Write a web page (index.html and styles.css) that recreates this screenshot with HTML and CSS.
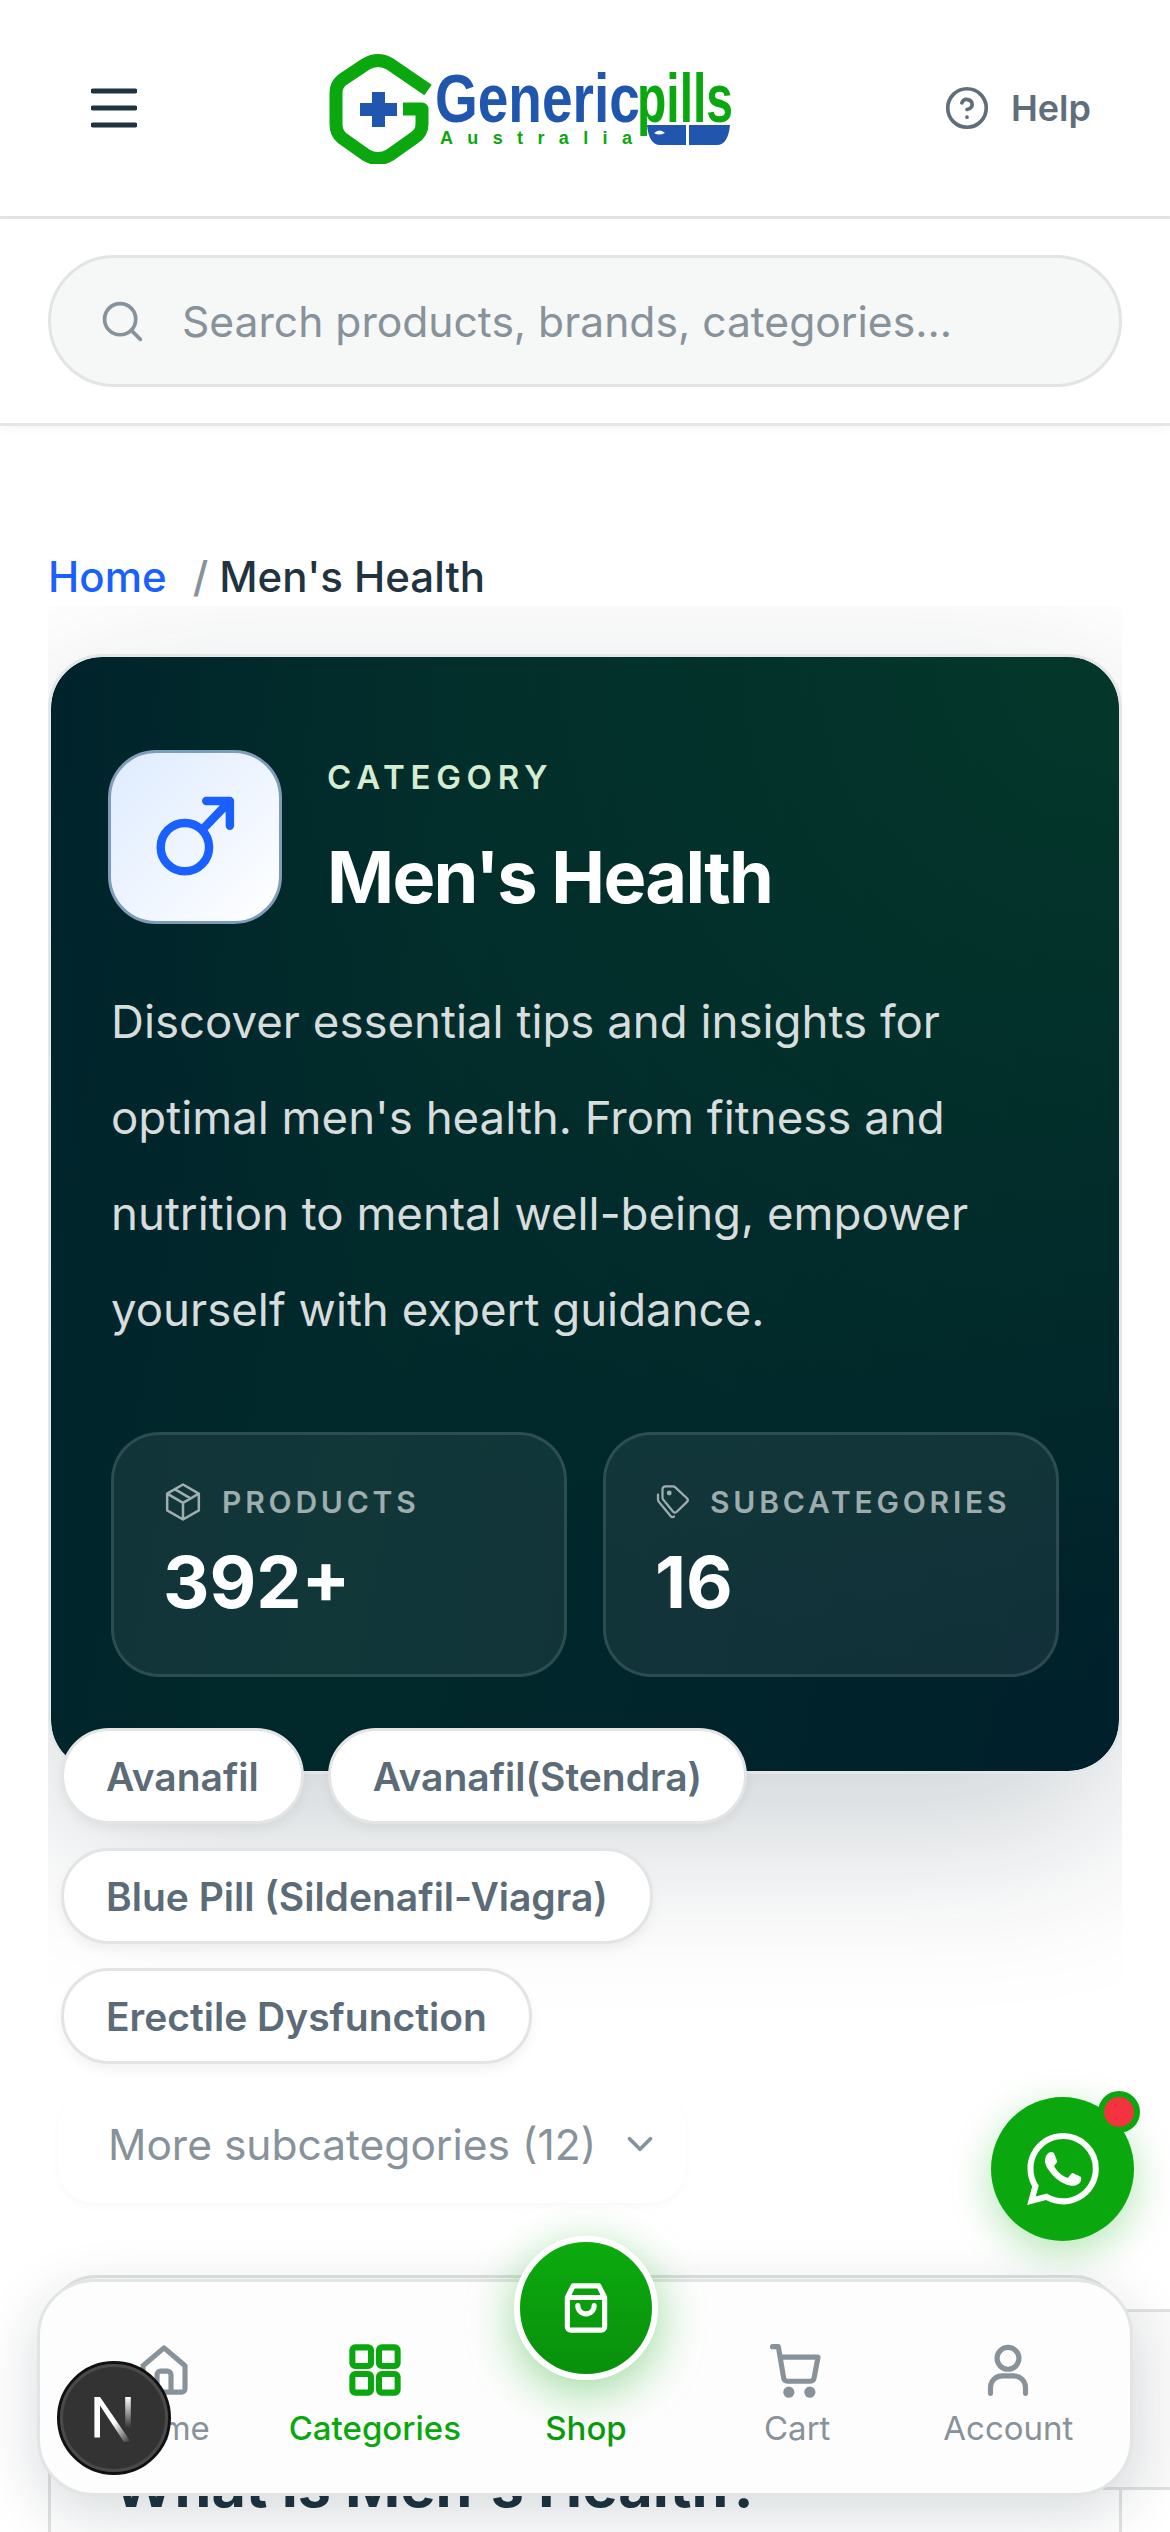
FILE: index.html
```html
<!DOCTYPE html>
<html lang="en">
<head>
  <meta charset="UTF-8">
  <title>Men's Health - Genericpills Australia</title>
  <link rel="stylesheet" href="styles.css">
</head>
<body>
  <header class="topbar">
    <svg class="menu-icon" viewBox="0 0 46 40"><path d="M2 3h42M2 20h42M2 37h42"/></svg>
    <svg class="logo" viewBox="0 0 410 112">
      <path class="logo-hex" d="M100 38 L62 12 Q50 5 38 12 L14 28 Q8 33 8 41 V72 Q8 81 14 86 L38 103 Q50 110 62 103 L86 86 Q94 81 94 72 V57 H75"/>
      <path class="logo-cross" d="M32 51h12V40h13v11h12v13H57v11H44V64H32z"/>
      <text class="logo-word logo-blue" transform="translate(107 70) scale(1 1.24)" font-size="55">Generic</text>
      <text class="logo-word logo-green" transform="translate(309 70) scale(1 1.42)" font-size="48">pills</text>
      <path class="logo-bowl" d="M319 73h39v20h-26q-11 0-13-20zM361 73h41q-2 20-13 20h-28z"/>
      <path class="logo-leaf" d="M326 81q6-5 11 0q-6 3-11 0z"/>
      <text class="logo-sub" x="112" y="92" textLength="192">Australia</text>
    </svg>
    <a class="help">
      <svg class="help-icon" viewBox="0 0 24 24"><circle cx="12" cy="12" r="10.5"/><path d="M9.200 9.200a2.900 2.900 0 0 1 5.600 1c0 1.900-2.800 2.600-2.800 2.600M12 17h.01"/></svg>
      Help
    </a>
  </header>

  <div class="searchbar">
    <div class="search">
      <svg class="search-icon" viewBox="0 0 24 24"><circle cx="11" cy="11" r="8.5"/><path d="M17.5 17.5 22 22"/></svg>
      <span class="placeholder">Search products, brands, categories...</span>
    </div>
  </div>

  <main class="main">
    <nav class="crumbs"><a class="crumb-link">Home</a><span class="crumb-sep">/</span><span>Men's Health</span></nav>

    <div class="clip">
      <section class="hero">
        <div class="hero-head">
          <div class="hero-icon">
            <svg viewBox="0 0 80 80"><circle cx="31" cy="49" r="21.5"/><path d="M47 33 71 8M50 8h21v22"/></svg>
          </div>
          <div>
            <div class="eyebrow">CATEGORY</div>
            <h1 class="hero-title">Men's Health</h1>
          </div>
        </div>
        <p class="hero-text">Discover essential tips and insights for optimal men's health. From fitness and nutrition to mental well-being, empower yourself with expert guidance.</p>
        <div class="stats">
          <div class="stat">
            <div class="stat-label">
              <svg viewBox="0 0 24 24"><path d="M12 1.500 21.500 7v10L12 22.500 2.500 17V7zM2.500 7l9.500 5.500L21.500 7M12 12.500v10M7 4.300l9.500 5.500"/></svg>
              PRODUCTS
            </div>
            <div class="stat-value">392+</div>
          </div>
          <div class="stat">
            <div class="stat-label">
              <svg class="tag-icon" viewBox="0 0 24 24"><path d="M7 1.500h5a2 2 0 0 1 1.400.6l7.900 7.400a1.700 1.700 0 0 1 0 2.400l-6.800 6.600a1.700 1.700 0 0 1-2.400 0L5.600 10.600a2 2 0 0 1-.6-1.400V3.500a2 2 0 0 1 2-2zM2 7v3.500a2 2 0 0 0 .6 1.400l7.900 9.600a1.700 1.700 0 0 0 2.200.2"/><circle cx="9.500" cy="6" r=".9"/></svg>
              SUBCATEGORIES
            </div>
            <div class="stat-value">16</div>
          </div>
        </div>
      </section>

      <div class="chips">
        <a class="chip">Avanafil</a>
        <a class="chip">Avanafil(Stendra)</a>
        <a class="chip">Blue Pill (Sildenafil-Viagra)</a>
        <a class="chip">Erectile Dysfunction</a>
      </div>

      <button class="more">
        More subcategories (12)
        <svg viewBox="0 0 24 24"><path d="m5 8.500 7 7 7-7"/></svg>
      </button>
    </div>

    <article class="article">
      <h2 class="article-title">What is Men's Health?</h2>
    </article>
  </main>

  <div class="peek"></div>

  <a class="whatsapp">
    <svg viewBox="0 0 24 24"><path d="M17.472 14.382c-.297-.149-1.758-.867-2.03-.967-.273-.099-.471-.148-.67.15-.197.297-.767.966-.94 1.164-.173.199-.347.223-.644.075-.297-.15-1.255-.463-2.39-1.475-.883-.788-1.48-1.761-1.653-2.059-.173-.297-.018-.458.13-.606.134-.133.298-.347.446-.52.149-.174.198-.298.298-.497.099-.198.05-.371-.025-.52-.075-.149-.669-1.612-.916-2.207-.242-.579-.487-.5-.669-.51-.173-.008-.371-.01-.57-.01-.198 0-.52.074-.792.372-.272.297-1.04 1.016-1.04 2.479 0 1.462 1.065 2.875 1.213 3.074.149.198 2.096 3.2 5.077 4.487.709.306 1.262.489 1.694.625.712.227 1.36.195 1.871.118.571-.085 1.758-.719 2.006-1.413.248-.694.248-1.289.173-1.413-.074-.124-.272-.198-.57-.347m-5.421 7.403h-.004a9.87 9.87 0 01-5.031-1.378l-.361-.214-3.741.982.998-3.648-.235-.374a9.86 9.86 0 01-1.51-5.26c.001-5.45 4.436-9.884 9.888-9.884 2.64 0 5.122 1.03 6.988 2.898a9.825 9.825 0 012.893 6.994c-.003 5.45-4.437 9.884-9.885 9.884m8.413-18.297A11.815 11.815 0 0012.05 0C5.495 0 .16 5.335.157 11.892c0 2.096.547 4.142 1.588 5.945L.057 24l6.305-1.654a11.882 11.882 0 005.683 1.448h.005c6.554 0 11.89-5.335 11.893-11.893a11.821 11.821 0 00-3.48-8.413Z"/></svg>
    <span class="whatsapp-dot"></span>
  </a>

  <nav class="tabbar">
    <a class="tab">
      <svg viewBox="0 0 24 24"><path d="M3 10.200 12 2.500l9 7.700V20a1.500 1.500 0 0 1-1.500 1.500h-15A1.500 1.500 0 0 1 3 20zM9 21.500V14a1.500 1.500 0 0 1 1.500-1.500h3A1.500 1.500 0 0 1 15 14v7.500"/></svg>
      Home
    </a>
    <a class="tab tab-active">
      <svg class="grid-icon" viewBox="0 0 24 24"><rect x="2.300" y="2.300" width="8" height="8" rx="1.200"/><rect x="13.700" y="2.300" width="8" height="8" rx="1.200"/><rect x="2.300" y="13.700" width="8" height="8" rx="1.200"/><rect x="13.700" y="13.700" width="8" height="8" rx="1.200"/></svg>
      Categories
    </a>
    <a class="tab tab-shop">
      <span class="shop-btn">
        <svg viewBox="0 0 24 24"><path d="M4 7.500 6.500 2.500h11L20 7.500V20a1.500 1.500 0 0 1-1.500 1.500h-13A1.500 1.500 0 0 1 4 20zM4 7.500h16M8.500 11a3.500 3.500 0 0 0 7 0"/></svg>
      </span>
      Shop
    </a>
    <a class="tab">
      <svg viewBox="0 0 24 24"><path d="M1.500 2H4l2.300 13.500a1.500 1.500 0 0 0 1.500 1.300h10a1.500 1.500 0 0 0 1.500-1.300L21 6.500H5"/><circle cx="8.500" cy="21.500" r="1.300" class="dot"/><circle cx="17.500" cy="21.500" r="1.300" class="dot"/></svg>
      Cart
    </a>
    <a class="tab">
      <svg viewBox="0 0 24 24"><circle cx="12" cy="7" r="4.700"/><path d="M4.500 22v-2.500a5 5 0 0 1 5-5h5a5 5 0 0 1 5 5V22"/></svg>
      Account
    </a>
  </nav>

  <div class="next-badge">
    <svg viewBox="0 0 60 60">
      <defs>
        <linearGradient id="nFade" x1="0" y1="0" x2="1" y2="1"><stop offset="0.55" stop-color="#fff"/><stop offset="1" stop-color="#fff" stop-opacity="0"/></linearGradient>
        <linearGradient id="nBar" x1="0" y1="0" x2="0" y2="1"><stop offset="0" stop-color="#fff"/><stop offset="1" stop-color="#fff" stop-opacity="0"/></linearGradient>
      </defs>
      <path d="M16 15h4l22 32h-5L20 21v23h-4z" fill="url(#nFade)"/>
      <rect x="38" y="15" width="4" height="22" fill="url(#nBar)"/>
    </svg>
  </div>
</body>
</html>
```

FILE: styles.css
```css
* {
  box-sizing: border-box;
}
body {
  margin: 0;
  width: 1170px;
  height: 2532px;
  overflow: hidden;
  position: relative;
  background-color: #fff;
  font-family: Inter, sans-serif;
  color: #1f3340;
}
svg {
  fill: none;
  stroke: currentColor;
  stroke-linecap: round;
  stroke-linejoin: round;
}

/* top bar */
.topbar {
  height: 219px;
  padding: 0 79px 0 91px;
  border-bottom: 3px solid #e2e4e5;
  display: flex;
  align-items: center;
}
.menu-icon {
  width: 46px;
  height: 40px;
  stroke: #1f3340;
  stroke-width: 5;
}
.logo {
  width: 410px;
  height: 112px;
  margin-left: 191px;
  stroke: none;
}
.logo-hex {
  fill: none;
  stroke: #0aa80e;
  stroke-width: 13;
  stroke-linejoin: round;
  stroke-linecap: butt;
}
.logo-cross {
  fill: #2056ad;
}
.logo-word {
  font-family: "Liberation Sans", sans-serif;
  font-weight: 700;
}
.logo-blue {
  fill: #2056ad;
}
.logo-green {
  fill: #0aa80e;
}
.logo-sub {
  font-family: "Liberation Sans", sans-serif;
  font-weight: 700;
  font-size: 18px;
  fill: #0aa80e;
  stroke: none;
}
.logo-bowl {
  fill: #2056ad;
}
.logo-leaf {
  fill: #fff;
}
.help {
  margin-left: auto;
  display: flex;
  align-items: center;
  gap: 22px;
  font-size: 36px;
  font-weight: 600;
  color: #5f6e7a;
}
.help-icon {
  width: 44px;
  height: 44px;
  stroke-width: 2;
}

/* search */
.searchbar {
  padding: 36px 48px;
  border-bottom: 3px solid #e4e6e7;
  box-shadow: 0 3px 9px rgba(0, 0, 0, 0.04);
}
.search {
  height: 132px;
  padding: 0 49px;
  display: flex;
  align-items: center;
  gap: 38px;
  background-color: #f6f7f7;
  border: 3px solid #e2e4e5;
  border-radius: 66px;
}
.search-icon {
  width: 44px;
  height: 44px;
  color: #87929a;
  stroke-width: 2;
}
.placeholder {
  font-size: 42.6px;
  color: #87929a;
}

/* page */
.main {
  padding: 120px 48px 0;
}
.crumbs {
  height: 60px;
  display: flex;
  align-items: center;
  font-size: 42px;
  font-weight: 500;
}
.crumb-link {
  color: #1a5fff;
}
.crumb-sep {
  margin: 0 11px 0 26px;
  color: #87929a;
}
.clip {
  overflow: hidden;
  padding-top: 48px;
  height: 1669px;
}
.hero {
  height: 1120px;
  padding: 93px 60px 0;
  border: 3px solid #e4e6e7;
  border-radius: 54px;
  background: radial-gradient(circle at 100% 0, #04382a 0, rgba(4, 56, 42, 0) 68%), linear-gradient(100deg, #00232b 0, #01292b 35%, #00202b 100%);
  background-clip: padding-box;
  box-shadow: 0 60px 180px rgba(0, 30, 45, 0.2);
  color: #fff;
}
.hero-head {
  margin-left: -3px;
  display: flex;
  gap: 45px;
}
.hero-icon {
  width: 174px;
  height: 174px;
  flex: none;
  display: flex;
  align-items: center;
  justify-content: center;
  border: 3px solid #7f9db8;
  border-radius: 48px;
  background: linear-gradient(135deg, #deebff, #fff);
}
.hero-icon svg {
  width: 90px;
  height: 90px;
  color: #1a5fff;
  stroke-width: 7.5;
}
.eyebrow {
  margin-top: 7px;
  font-size: 33px;
  line-height: 40px;
  font-weight: 600;
  letter-spacing: 5.7px;
  color: #d5ecd0;
}
.hero-title {
  margin: 35px 0 0;
  font-size: 72px;
  line-height: 90px;
  font-weight: 700;
  letter-spacing: -1.7px;
}
.hero-text {
  margin: 50px 0 0;
  font-size: 45.6px;
  line-height: 96px;
  color: rgba(255, 255, 255, 0.85);
}
.stats {
  margin-top: 74px;
  display: grid;
  grid-template-columns: minmax(0, 1fr) minmax(0, 1fr);
  gap: 36px;
}
.stat {
  height: 245px;
  padding: 46px 49px 0;
  background-color: rgba(255, 255, 255, 0.065);
  border: 3px solid rgba(255, 255, 255, 0.12);
  border-radius: 48px;
}
.stat-label {
  display: flex;
  align-items: center;
  gap: 19px;
  height: 42px;
  font-size: 30px;
  font-weight: 600;
  letter-spacing: 3.8px;
  white-space: nowrap;
  color: rgba(255, 255, 255, 0.6);
}
.stat-label svg {
  width: 40px;
  height: 40px;
  flex: none;
  stroke-width: 1.5;
}
.stat-label .tag-icon {
  width: 36px;
  height: 36px;
}
.stat-value {
  margin-top: 14px;
  font-size: 72px;
  line-height: 90px;
  font-weight: 700;
}

/* subcategory chips */
.chips {
  margin-top: -46px;
  padding: 0 13px;
  display: flex;
  flex-wrap: wrap;
  gap: 24px;
  position: relative;
}
.chip {
  height: 96px;
  padding: 0 42px;
  display: flex;
  align-items: center;
  background-color: #fff;
  border: 3px solid #e2e4e5;
  border-radius: 48px;
  box-shadow: 0 6px 12px rgba(0, 0, 0, 0.05);
  font-size: 39px;
  font-weight: 600;
  color: #5b6b77;
}
.more {
  margin: 29px 0 0 10px;
  width: 628px;
  height: 110px;
  padding: 0 0 8px 50px;
  display: flex;
  align-items: center;
  gap: 26px;
  background-color: #fff;
  border: 0;
  border-radius: 36px;
  box-shadow: 0 3px 9px rgba(0, 0, 0, 0.03);
  font-family: inherit;
  font-size: 42.5px;
  color: #87929a;
}
.more svg {
  width: 36px;
  height: 36px;
  stroke-width: 2.5;
}

/* article behind the tab bar */
.article {
  height: 400px;
  padding: 172px 62px 0;
  background-color: #fff;
  border: 3px solid #e0e2e3;
  border-radius: 48px;
}
.article-title {
  margin: 0;
  font-size: 59.3px;
  line-height: 72px;
  font-weight: 700;
}

/* floating things */
.peek {
  position: absolute;
  right: 0;
  top: 2309px;
  width: 100px;
  height: 181px;
  background-color: #fafafa;
  border: 3px solid #dfe1e2;
  border-right: 0;
}
.whatsapp {
  position: absolute;
  left: 991px;
  top: 2097px;
  width: 143px;
  height: 144px;
  display: flex;
  align-items: center;
  justify-content: center;
  border-radius: 50%;
  background-color: #0aa80e;
  box-shadow: 0 12px 40px rgba(10, 168, 14, 0.3);
}
.whatsapp svg {
  width: 72px;
  height: 72px;
  fill: #fff;
  stroke: none;
}
.whatsapp-dot {
  position: absolute;
  right: -6px;
  top: -6px;
  width: 42px;
  height: 42px;
  background-color: #f5333f;
  border: 6px solid #0aa80e;
  border-radius: 50%;
}
.tabbar {
  position: absolute;
  left: 37px;
  top: 2279px;
  width: 1096px;
  height: 217px;
  padding: 0 16px 0 18px;
  display: grid;
  grid-template-columns: repeat(5, 1fr);
  background-color: #fdfdfd;
  border: 3px solid #e2e4e5;
  border-radius: 57px;
  box-shadow: 0 18px 60px rgba(0, 30, 45, 0.16);
}
.tab {
  padding-top: 60px;
  display: flex;
  flex-direction: column;
  align-items: center;
  gap: 8px;
  font-size: 33px;
  line-height: 44px;
  color: #87929a;
  position: relative;
}
.tab svg {
  width: 56px;
  height: 56px;
  stroke-width: 2.2;
}
.tab .grid-icon {
  stroke-width: 2.6;
}
.tab .dot {
  fill: currentColor;
}
.tab-active {
  color: #0aa80e;
  font-weight: 500;
}
.tab-shop {
  color: #0a9a0d;
  font-weight: 500;
  padding-top: 124px;
}
.shop-btn {
  position: absolute;
  left: 50%;
  top: -46px;
  margin-left: -72px;
  width: 144px;
  height: 144px;
  display: flex;
  align-items: center;
  justify-content: center;
  border: 6px solid #fff;
  border-radius: 50%;
  background: linear-gradient(#0cab0e, #098f0c);
  box-shadow: 0 12px 48px rgba(10, 168, 14, 0.4);
  color: #fff;
}
.next-badge {
  position: absolute;
  left: 57px;
  top: 2361px;
  width: 114px;
  height: 114px;
  display: flex;
  align-items: center;
  justify-content: center;
  background-color: #333;
  border: 3px solid #111;
  outline: 3px solid #4a4a4a;
  outline-offset: -6px;
  border-radius: 50%;
}
.next-badge svg {
  width: 84px;
  height: 84px;
  stroke: none;
}
```
